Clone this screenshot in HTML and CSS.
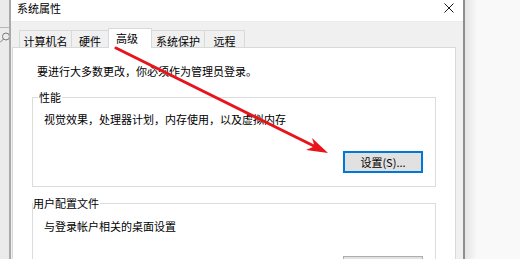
FILE: index.html
```html
<!DOCTYPE html>
<html lang="zh-CN">
  <head>
    <meta charset="UTF-8" />
    <meta name="viewport" content="width=device-width, initial-scale=1.0" />
    <title>系统属性</title>
    <link rel="stylesheet" href="styles.css">
  </head>
  <body>
    <div class="screen">
      <div class="bg-left">
        <svg width="9" height="259" viewBox="0 0 9 259">
          <line x1="0" y1="27.5" x2="9" y2="27.5" stroke="#b8b8b8" />
          <circle cx="6" cy="36.5" r="3.5" fill="none" stroke="#7a7a7a" />
          <line x1="3.5" y1="39" x2="0" y2="42.5" stroke="#7a7a7a" />
        </svg>
      </div>
      <div class="dialog">
        <div class="titlebar">
          <span class="title">系统属性</span>
          <svg class="close" width="10" height="10" viewBox="0 0 10 10">
            <path d="M0.5 0.5 L9.5 9.5 M9.5 0.5 L0.5 9.5" stroke="#1a1a1a" stroke-width="1" />
          </svg>
        </div>
        <div class="dialog-body">
          <div class="tabs">
            <div class="tab w-name">计算机名</div>
            <div class="tab w-hw">硬件</div>
            <div class="tab w-adv active">高级</div>
            <div class="tab w-prot">系统保护</div>
            <div class="tab w-rem">远程</div>
          </div>
          <div class="panel">
            <p class="intro">要进行大多数更改，你必须作为管理员登录。</p>
            <fieldset class="group perf">
              <legend>性能</legend>
              <p class="desc">视觉效果，处理器计划，内存使用，以及虚拟内存</p>
              <div class="actions">
                <button class="btn focused">设置(S)...</button>
              </div>
            </fieldset>
            <fieldset class="group profile">
              <legend>用户配置文件</legend>
              <p class="desc">与登录帐户相关的桌面设置</p>
              <div class="actions">
                <!-- only the top edge of this button is on screen -->
                <button class="btn" aria-label="设置(E)..."></button>
              </div>
            </fieldset>
          </div>
        </div>
      </div>
      <div class="bg-right"></div>

      <!-- red annotation arrow drawn over the dialog -->
      <svg class="arrow" width="520" height="259" viewBox="0 0 520 259">
        <line x1="116" y1="48" x2="316" y2="147" stroke="#e8141c" stroke-width="3" stroke-linecap="round" />
        <polygon points="328,153 306,150 314.6,146.3 312,138" fill="#e8141c" />
      </svg>
    </div>
  </body>
</html>
```

FILE: styles.css
```css
* {
  box-sizing: border-box;
}

body {
  margin: 0;
  font-family: "Noto Sans CJK SC", "Noto Sans", sans-serif;
  font-size: 11px;
  color: #000;
  background: #f9f9f9;
}

.screen {
  position: relative;
  display: flex;
  width: 520px;
  height: 259px;
  overflow: hidden;
}

.bg-left {
  width: 9px;
  background: #ebebeb;
  flex-shrink: 0;
}

.bg-left svg {
  display: block;
}

.dialog {
  width: 456px;
  flex-shrink: 0;
  display: flex;
  flex-direction: column;
  border-left: 2px solid #a9a9a9;
  border-right: 2px solid #8e8e8e;
  background: #f0f0f0;
}

.titlebar {
  height: 22px;
  flex-shrink: 0;
  display: flex;
  justify-content: space-between;
  align-items: flex-start;
  padding: 0 9px 0 6px;
  background: #fff;
  border-bottom: 1px solid #ececec;
}

.title {
  line-height: 14px;
  padding-top: 1px;
}

.close {
  margin-top: 3px;
}

.dialog-body {
  flex: 1;
  min-height: 0;
  display: flex;
  flex-direction: column;
  padding: 6px 7px 0 1px;
}

.tabs {
  display: flex;
  align-items: flex-end;
  height: 20px;
  flex-shrink: 0;
  padding-left: 8px;
  margin-bottom: -1px;
}

.tab {
  height: 17px;
  margin-bottom: 1px;
  padding-top: 3px;
  line-height: 14px;
  text-align: center;
  background: #f0f0f0;
  border: 1px solid #d9d9d9;
  border-bottom: none;
  margin-left: -1px;
}

.tab.active {
  position: relative;
  height: 20px;
  margin-bottom: 0;
  padding-top: 2px;
  padding-right: 6px;
  background: #fff;
}

.w-name { width: 53px; }
.w-hw { width: 38px; }
.w-adv { width: 44px; }
.w-prot { width: 54px; }
.w-rem { width: 41px; }

.panel {
  flex: 1;
  min-height: 0;
  overflow: hidden;
  padding-top: 16px;
  background: #fff;
  border: 1px solid #d9d9d9;
  border-bottom: none;
}

.intro {
  margin: 0;
  padding-left: 24px;
  line-height: 14px;
}

.group {
  margin: 12px 19px 0;
  padding: 0;
  border: 1px solid #dcdcdc;
}

.group legend {
  padding: 0 1px;
  line-height: 14px;
}

.perf legend {
  margin-left: 5px;
}

.profile {
  margin-top: 9px;
}

.profile legend {
  padding-left: 0;
}

.desc {
  margin: 8px 0 0;
  padding-left: 11px;
  line-height: 14px;
}

.profile .desc {
  margin-top: 9px;
}

.actions {
  display: flex;
  justify-content: flex-end;
  margin-top: 25px;
  padding: 0 12px 13px 0;
}

.profile .actions {
  margin-top: 23px;
}

.btn {
  width: 80px;
  height: 22px;
  padding: 0;
  font-family: inherit;
  font-size: 11px;
  color: #000;
  background: #e1e1e1;
  border: 1px solid #adadad;
}

.btn.focused {
  border-color: #0078d7;
  box-shadow: inset 0 0 0 1px #0078d7;
}

.bg-right {
  flex: 1;
  background: linear-gradient(to right, #e4e4e4, #f9f9f9 12px);
}

.arrow {
  position: absolute;
  left: 0;
  top: 0;
  pointer-events: none;
}
```
